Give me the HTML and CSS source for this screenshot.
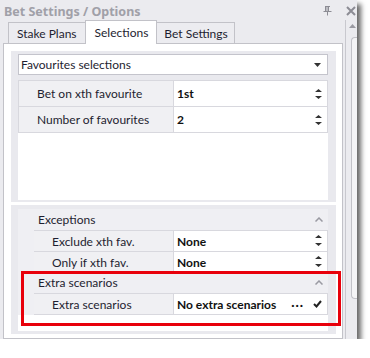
FILE: index.html
```html
<!DOCTYPE html>
<html lang="en">
<head>
    <meta charset="UTF-8">
    <title>Bet Settings / Options</title>
    <link rel="stylesheet" href="styles.css">
</head>
<body>

    <!-- Tool window -->
    <div class="window">
        <div class="titlebar">
            <span class="title">Bet Settings / Options</span>
            <svg class="pin" width="9" height="10" viewBox="0 0 9 10">
                <path d="M2 0.5h5M2.5 0.5v5M5.5 0.5v5M4 0.5v5M0.5 5.5h8M4.5 5.5v4" stroke="#8c8c94" stroke-width="1" fill="none"/>
            </svg>
            <svg class="close" width="10" height="10" viewBox="0 0 10 10">
                <path d="M1 1L9 9M9 1L1 9" stroke="#8c8c94" stroke-width="2"/>
            </svg>
        </div>

        <div class="main">
            <div class="tabs-area">
                <div class="tabstrip">
                    <div class="tab">Stake Plans</div>
                    <div class="tab active">Selections</div>
                    <div class="tab">Bet Settings</div>
                </div>

                <div class="tabpage">
                    <!-- Selections block -->
                    <div class="panel panel-top">
                        <div class="dropdown">
                            <span>Favourites selections</span>
                            <svg width="7" height="4" viewBox="0 0 7 4"><path d="M0 0h7L3.5 4z" fill="#333"/></svg>
                        </div>
                        <div class="grid">
                            <div class="row">
                                <div class="cell label">Bet on xth favourite</div>
                                <div class="cell value">1st
                                    <svg class="spin" width="7" height="14" viewBox="0 0 7 14"><path d="M3.5 2L7 5H0z M0 9h7L3.5 12z" fill="#333"/></svg>
                                </div>
                            </div>
                            <div class="row">
                                <div class="cell label">Number of favourites</div>
                                <div class="cell value">2
                                    <svg class="spin" width="7" height="14" viewBox="0 0 7 14"><path d="M3.5 2L7 5H0z M0 9h7L3.5 12z" fill="#333"/></svg>
                                </div>
                            </div>
                        </div>
                    </div>

                    <!-- Exceptions / extra scenarios -->
                    <div class="panel panel-bottom">
                        <div class="pgrid">
                            <div class="category">
                                <div class="cat-head">Exceptions
                                    <svg class="chev" width="8" height="5" viewBox="0 0 8 5"><path d="M0.5 4.5L4 1L7.5 4.5" stroke="#9a9aa2" stroke-width="1.5" fill="none"/></svg>
                                </div>
                                <div class="subrow">
                                    <div class="cell label">Exclude xth fav.</div>
                                    <div class="cell value">None
                                        <svg class="spin" width="7" height="14" viewBox="0 0 7 14"><path d="M3.5 1L7 4H0z M0 9h7L3.5 12z" fill="#333"/></svg>
                                    </div>
                                </div>
                                <div class="subrow">
                                    <div class="cell label">Only if xth fav.</div>
                                    <div class="cell value">None
                                        <svg class="spin" width="7" height="14" viewBox="0 0 7 14"><path d="M3.5 1L7 4H0z M0 9h7L3.5 12z" fill="#333"/></svg>
                                    </div>
                                </div>
                            </div>
                            <div class="category">
                                <div class="cat-head">Extra scenarios
                                    <svg class="chev" width="8" height="5" viewBox="0 0 8 5"><path d="M0.5 4.5L4 1L7.5 4.5" stroke="#9a9aa2" stroke-width="1.5" fill="none"/></svg>
                                </div>
                                <div class="subrow">
                                    <div class="cell label">Extra scenarios</div>
                                    <div class="cell value">No extra scenarios
                                        <span class="dots">···</span>
                                        <svg class="check" width="9" height="8" viewBox="0 0 9 8"><path d="M1 4L3.5 6.5L8 1" stroke="#222" stroke-width="2" fill="none"/></svg>
                                    </div>
                                </div>
                            </div>
                        </div>
                    </div>
                </div>
            </div>

            <div class="scrollbar">
                <svg class="sb-up" width="7" height="4" viewBox="0 0 7 4"><path d="M3.5 0L7 4H0z" fill="#9a9aa2"/></svg>
                <div class="thumb"></div>
            </div>
        </div>

        <!-- highlight box -->
        <div class="highlight"></div>
    </div>

</body>
</html>
```

FILE: styles.css
```css
* {
    margin: 0;
    padding: 0;
    box-sizing: border-box;
}

body {
    background: #fff;
    font-family: Lato, "Noto Sans", sans-serif;
    font-size: 12px;
    color: #1e1e30;
}

/* Window */
.window {
    position: relative;
    width: 357px;
    height: 339px;
    background: #ebebef;
    box-shadow: 4px 4px 5px rgba(0, 0, 0, 0.6);
    overflow: hidden;
    display: flex;
    flex-direction: column;
}

.titlebar {
    height: 20px;
    display: flex;
    align-items: center;
    padding: 2px 0 0 4px;
}

.title {
    font-family: "Noto Sans", sans-serif;
    font-weight: bold;
    font-size: 12.5px;
    color: #a0a0a8;
    flex: 1;
}

.pin {
    margin-right: 14px;
}

.close {
    margin-right: 1px;
}

.main {
    flex: 1;
    display: flex;
}

/* Tabs */
.tabs-area {
    width: 345px;
    padding-left: 3px;
    display: flex;
    flex-direction: column;
}

.tabstrip {
    height: 23px;
    display: flex;
    align-items: flex-end;
    padding-left: 5px;
}

.tab {
    height: 21px;
    padding: 0 8px 0 8px;
    border: 1px solid #c2c2c8;
    border-bottom: none;
    background: #ececf0;
    display: flex;
    align-items: center;
    color: #1e1e30;
}

.tab + .tab {
    margin-left: -1px;
}

.tab:last-child {
    padding: 0 6px 0 7px;
}

.tab.active {
    height: 24px;
    margin-bottom: -1px;
    background: #fff;
    padding: 0 8px 0 9px;
    position: relative;
    z-index: 1;
}

.tabpage {
    flex: 1;
    background: #fff;
    border: 1px solid #c2c2c8;
    padding: 7px 6px 4px 7px;
    display: flex;
    flex-direction: column;
    gap: 3px;
}

/* Panels */
.panel {
    background: #e9e9ee;
    padding: 3px 8px 2px 7px;
}

.panel-top {
    height: 151px;
    display: flex;
    flex-direction: column;
    gap: 5px;
}

.panel-bottom {
    flex: 1;
    padding: 4px 8px 3px 7px;
}

.dropdown {
    height: 21px;
    background: #fff;
    border: 1px solid #c4c4cc;
    display: flex;
    align-items: center;
    justify-content: space-between;
    padding: 0 6px 0 2px;
}

.grid {
    flex: 1;
    background: #fff;
}

.row {
    height: 26px;
    display: flex;
    border: 1px solid #d8d8de;
    border-top: none;
}

.row:first-child {
    height: 27px;
    border-top: 1px solid #d8d8de;
}

.cell {
    display: flex;
    align-items: center;
}

.label {
    background: #f0f0f3;
    border-right: 1px solid #d8d8de;
}

.row .label {
    width: 155px;
    padding-left: 18px;
}

.value {
    flex: 1;
    font-weight: bold;
    color: #111;
    padding-left: 3px;
    padding-right: 5px;
}

.spin {
    margin-left: auto;
}

/* Property grid */
.pgrid {
    height: 100%;
    background: #fff;
}

.category {
    background: #efeff3;
}

.cat-head {
    height: 21px;
    display: flex;
    align-items: center;
    padding-left: 20px;
    padding-right: 5px;
}

.chev {
    margin-left: auto;
}

.subrow {
    height: 21px;
    margin-left: 16px;
    display: flex;
    border-top: 1px solid #d8d8de;
    border-right: 1px solid #d8d8de;
}

.category:last-child .subrow {
    border-bottom: 1px solid #d8d8de;
    height: 22px;
}

.subrow .label {
    width: 140px;
    padding-left: 18px;
}

.subrow .value {
    background: #fff;
}

.dots {
    margin-left: auto;
    margin-right: 9px;
    letter-spacing: 1px;
}

/* Scrollbar */
.scrollbar {
    width: 12px;
    margin-left: 2px;
    border-left: 1px solid #c8c8ce;
    display: flex;
    flex-direction: column;
    align-items: flex-end;
    padding-top: 4px;
}

.sb-up {
    margin-right: 1px;
}

.thumb {
    margin-top: 9px;
    width: 6px;
    height: 262px;
    border: 1px solid #c2c2c8;
    border-right: none;
    border-radius: 4px 0 0 4px;
    background: #f4f4f6;
}

/* Red annotation box */
.highlight {
    position: absolute;
    left: 21px;
    top: 271px;
    width: 320px;
    height: 55px;
    border: 3px solid #e8000b;
}
```
